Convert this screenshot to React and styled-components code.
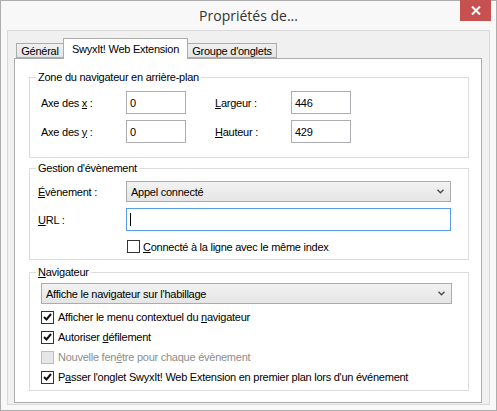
import React from "react";
import styled, { createGlobalStyle } from "styled-components";

const GlobalStyle = createGlobalStyle`
  *, *::before, *::after { box-sizing: border-box; }
  html, body { margin: 0; padding: 0; background: #ffffff; }
  body {
    font-family: "Liberation Sans", Arial, sans-serif;
    font-size: 11px;
    letter-spacing: -0.25px;
    color: #000;
  }
`;

const Window = styled.div`
  width: 497px;
  height: 411px;
  border: 1px solid #adadad;
  background: #f8f8f8;
  display: flex;
  flex-direction: column;
`;

const TitleBar = styled.div`
  height: 29px;
  flex: none;
  display: grid;
  grid-template-columns: 1fr auto 1fr;
  align-items: center;
`;

const Title = styled.div`
  grid-column: 2;
  font-family: "Open Sans", "Noto Sans", sans-serif;
  font-size: 14px;
  letter-spacing: 0;
  color: #333;
  white-space: nowrap;
`;

const CloseButton = styled.div`
  grid-column: 3;
  justify-self: end;
  align-self: start;
  margin: -1px 5px 0 0;
  width: 31px;
  height: 21px;
  background: #c75050;
  display: flex;
  align-items: center;
  justify-content: center;
`;

const ClientArea = styled.div`
  flex: 1;
  margin: 0 6px 5px;
  border: 1px solid #d9d9d9;
  background: #f0f0f0;
  padding: 7px 7px 1px 6px;
  display: flex;
  flex-direction: column;
`;

const TabStrip = styled.div`
  display: flex;
  align-items: flex-end;
  height: 21px;
  margin-bottom: -1px;
  padding-left: 2px;
  position: relative;
  z-index: 1;
`;

const Tab = styled.div`
  width: ${(p) => p.$w}px;
  height: ${(p) => (p.$active ? 21 : 15)}px;
  margin-right: -1px;
  margin-bottom: ${(p) => (p.$active ? 0 : 1)}px;
  border: 1px solid #acacac;
  border-bottom: ${(p) => (p.$active ? "none" : "1px solid #acacac")};
  background: ${(p) => (p.$active ? "#ffffff" : "linear-gradient(#f0f0f0, #e5e5e5)")};
  display: flex;
  align-items: center;
  justify-content: center;
  white-space: nowrap;
  position: relative;
  z-index: ${(p) => (p.$active ? 2 : 1)};
  padding-bottom: ${(p) => (p.$active ? 1 : 0)}px;
`;

const Panel = styled.div`
  flex: 1;
  background: #ffffff;
  border: 1px solid #acacac;
  padding: 11px 12px 0 14px;
  display: flex;
  flex-direction: column;
`;

const Group = styled.fieldset`
  margin: ${(p) => p.$mt || 0}px 0 0;
  padding: 0;
  border: 1px solid #dcdcdc;
  min-width: 0;
`;

const Legend = styled.legend`
  margin-left: 6px;
  padding: 0 2px;
  line-height: 14px;
  height: 14px;
`;

const GroupBody = styled.div`
  padding: ${(p) => p.$pad};
  display: flex;
  flex-direction: column;
`;

const CoordGrid = styled.div`
  display: grid;
  grid-template-columns: 85px 89px 76px 60px;
  grid-auto-rows: 23px;
  row-gap: 6px;
  align-items: center;
`;

const FieldRow = styled.div`
  display: grid;
  grid-template-columns: 88px auto;
  align-items: center;
  margin-top: ${(p) => p.$mt || 0}px;
`;

const Label = styled.span`
  white-space: nowrap;
`;

const Key = styled.u`
  text-decoration: underline;
  text-underline-offset: 1px;
`;

const TextBox = styled.div`
  width: ${(p) => p.$w}px;
  height: 23px;
  border: 1px solid ${(p) => (p.$focused ? "#569de5" : "#abadb3")};
  background: #ffffff;
  padding: 0 3px;
  display: flex;
  align-items: center;
  white-space: nowrap;
`;

const Caret = styled.span`
  width: 1px;
  height: 13px;
  background: #000;
`;

const Combo = styled.div`
  width: ${(p) => p.$w}px;
  height: 21px;
  border: 1px solid #acacac;
  background: linear-gradient(#f2f2f2, #e5e5e5);
  display: flex;
  align-items: center;
  justify-content: space-between;
  padding: 0 6px 0 4px;
  white-space: nowrap;
`;

const CheckList = styled.div`
  display: flex;
  flex-direction: column;
  margin: ${(p) => p.$m || "0"};
`;

const CheckRow = styled.div`
  display: flex;
  align-items: center;
  gap: ${(p) => p.$gap || 4}px;
  height: ${(p) => p.$h || 20}px;
  white-space: nowrap;
  color: ${(p) => (p.$disabled ? "#8d8d8d" : "#000")};
`;

const Box = styled.span`
  flex: none;
  width: 13px;
  height: 13px;
  border: 1px solid ${(p) => (p.$disabled ? "#bcbcbc" : "#333333")};
  background: ${(p) => (p.$disabled ? "#e6e6e6" : "#ffffff")};
  display: flex;
  align-items: center;
  justify-content: center;
`;

const CloseGlyph = () => (
  <svg width="10" height="9" viewBox="0 0 10 9">
    <path d="M1 0.5 L9 8.5 M9 0.5 L1 8.5" stroke="#fff" strokeWidth="2" fill="none" />
  </svg>
);

const Chevron = () => (
  <svg width="7" height="5" viewBox="0 0 7 5">
    <path d="M0.5 0.8 L3.5 3.8 L6.5 0.8" stroke="#4d4d4d" strokeWidth="1.4" fill="none" />
  </svg>
);

const Tick = () => (
  <svg width="9" height="8" viewBox="0 0 9 8">
    <path d="M1 4 L3.5 6.5 L8 1" stroke="#111" strokeWidth="2" fill="none" />
  </svg>
);

const Check = ({ checked, disabled, children, gap, h }) => (
  <CheckRow $disabled={disabled} $gap={gap} $h={h}>
    <Box $disabled={disabled}>{checked && <Tick />}</Box>
    <span>{children}</span>
  </CheckRow>
);

export default function App() {
  return (
    <>
      <GlobalStyle />
      <Window>
        <TitleBar>
          <Title>Propriétés de...</Title>
          <CloseButton>
            <CloseGlyph />
          </CloseButton>
        </TitleBar>
        <ClientArea>
          <TabStrip>
            <Tab $w={48}>Général</Tab>
            <Tab $w={125} $active>
              SwyxIt! Web Extension
            </Tab>
            <Tab $w={90}>Groupe d'onglets</Tab>
          </TabStrip>
          <Panel>
            <Group>
              <Legend>Zone du navigateur en arrière-plan</Legend>
              <GroupBody $pad="7px 11px 14px">
                <CoordGrid>
                  <Label>
                    Axe des <Key>x</Key> :
                  </Label>
                  <TextBox $w={60}>0</TextBox>
                  <Label>
                    <Key>L</Key>argeur :
                  </Label>
                  <TextBox $w={60}>446</TextBox>
                  <Label>
                    Axe des <Key>y</Key> :
                  </Label>
                  <TextBox $w={60}>0</TextBox>
                  <Label>
                    <Key>H</Key>auteur :
                  </Label>
                  <TextBox $w={60}>429</TextBox>
                </CoordGrid>
              </GroupBody>
            </Group>

            <Group $mt={3}>
              <Legend>Gestion d'évènement</Legend>
              <GroupBody $pad="6px 8px 5px">
                <FieldRow>
                  <Label>
                    <Key>É</Key>vènement :
                  </Label>
                  <Combo $w={325}>
                    <span>Appel connecté</span>
                    <Chevron />
                  </Combo>
                </FieldRow>
                <FieldRow $mt={6}>
                  <Label>
                    <Key>U</Key>RL :
                  </Label>
                  <TextBox $w={325} $focused>
                    <Caret />
                  </TextBox>
                </FieldRow>
                <CheckList $m="8px 0 0 89px">
                  <Check gap={3} h={15}>
                    <Key>C</Key>onnecté à la ligne avec le même index
                  </Check>
                </CheckList>
              </GroupBody>
            </Group>

            <Group $mt={5}>
              <Legend>
                <Key>N</Key>avigateur
              </Legend>
              <GroupBody $pad="4px 11px 3px">
                <Combo $w={411}>
                  <span>Affiche le navigateur sur l'habillage</span>
                  <Chevron />
                </Combo>
                <CheckList $m="3px 0 0">
                  <Check checked>
                    Afficher le menu contextuel du <Key>n</Key>avigateur
                  </Check>
                  <Check checked>
                    Autoriser <Key>d</Key>éfilement
                  </Check>
                  <Check disabled>
                    Nouvelle fen<Key>ê</Key>tre pour chaque évènement
                  </Check>
                  <Check checked>
                    P<Key>a</Key>sser l'onglet SwyxIt! Web Extension en premier plan lors d'un
                    événement
                  </Check>
                </CheckList>
              </GroupBody>
            </Group>
          </Panel>
        </ClientArea>
      </Window>
    </>
  );
}
